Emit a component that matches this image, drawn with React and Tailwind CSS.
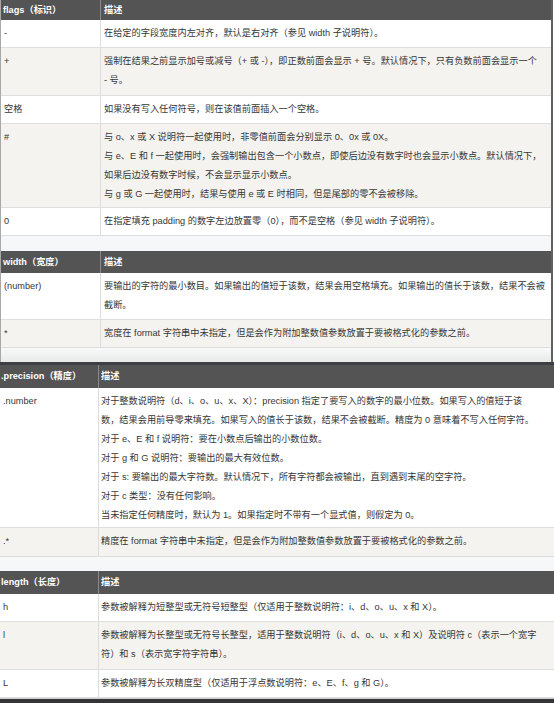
import React from "react";

const T1 = [
  { k: "-", lines: ["在给定的字段宽度内左对齐，默认是右对齐（参见 width 子说明符）。"] },
  {
    k: "+",
    alt: true,
    pb: "pb-[5px]",
    lines: [
      "强制在结果之前显示加号或减号（+ 或 -），即正数前面会显示 + 号。默认情况下，只有负数前面会显示一个",
      "- 号。",
    ],
  },
  { k: "空格", lines: ["如果没有写入任何符号，则在该值前面插入一个空格。"] },
  {
    k: "#",
    alt: true,
    pb: "pb-[3px]",
    lines: [
      "与 o、x 或 X 说明符一起使用时，非零值前面会分别显示 0、0x 或 0X。",
      "与 e、E 和 f 一起使用时，会强制输出包含一个小数点，即使后边没有数字时也会显示小数点。默认情况下，",
      "如果后边没有数字时候，不会显示显示小数点。",
      "与 g 或 G 一起使用时，结果与使用 e 或 E 时相同，但是尾部的零不会被移除。",
    ],
  },
  { k: "0", lines: ["在指定填充 padding 的数字左边放置零（0），而不是空格（参见 width 子说明符）。"] },
];

const T2 = [
  {
    k: "(number)",
    lines: [
      "要输出的字符的最小数目。如果输出的值短于该数，结果会用空格填充。如果输出的值长于该数，结果不会被",
      "截断。",
    ],
  },
  { k: "*", alt: true, lines: ["宽度在 format 字符串中未指定，但是会作为附加整数值参数放置于要被格式化的参数之前。"] },
];

const T3 = [
  {
    k: ".number",
    pb: "pb-[2px]",
    lines: [
      "对于整数说明符（d、i、o、u、x、X）：precision 指定了要写入的数字的最小位数。如果写入的值短于该",
      "数，结果会用前导零来填充。如果写入的值长于该数，结果不会被截断。精度为 0 意味着不写入任何字符。",
      "对于 e、E 和 f 说明符：要在小数点后输出的小数位数。",
      "对于 g 和 G 说明符：要输出的最大有效位数。",
      "对于 s: 要输出的最大字符数。默认情况下，所有字符都会被输出，直到遇到末尾的空字符。",
      "对于 c 类型：没有任何影响。",
      "当未指定任何精度时，默认为 1。如果指定时不带有一个显式值，则假定为 0。",
    ],
  },
  { k: ".*", alt: true, pb: "pb-[5px]", lines: ["精度在 format 字符串中未指定，但是会作为附加整数值参数放置于要被格式化的参数之前。"] },
];

const T4 = [
  { k: "h", lines: ["参数被解释为短整型或无符号短整型（仅适用于整数说明符：i、d、o、u、x 和 X）。"] },
  {
    k: "l",
    alt: true,
    pb: "pb-[5px]",
    lines: [
      "参数被解释为长整型或无符号长整型，适用于整数说明符（i、d、o、u、x 和 X）及说明符 c（表示一个宽字",
      "符）和 s（表示宽字符字符串）。",
    ],
  },
  { k: "L", lines: ["参数被解释为长双精度型（仅适用于浮点数说明符：e、E、f、g 和 G）。"] },
];

function Table({ head, rows, headH, shifted }) {
  return (
    <div>
      <div className={`flex bg-[#545454] text-white font-bold ${headH}`}>
        <div
          className={`w-[100px] shrink-0 border-r border-[#8a8a8a] flex items-center ${
            shifted ? "pl-[2px]" : "pl-[2px]"
          }`}
        >
          {head}
        </div>
        <div className={`flex-1 flex items-center ${shifted ? "pl-[2px]" : "pl-[3px]"}`}>描述</div>
      </div>
      {rows.map((r, i) => (
        <div
          key={i}
          className={`flex border-b border-[#dedede] ${r.alt ? "bg-[#f4f3f0]" : "bg-white"}`}
        >
          <div
            className={`w-[100px] shrink-0 border-r border-[#dcdcdc] pt-[4px] ${
              shifted ? "pl-[4px]" : "pl-[3px]"
            }`}
          >
            {r.k}
          </div>
          <div
            className={`flex-1 pt-[4px] ${r.pb || "pb-[4px]"} ${shifted ? "pl-[2px]" : "pl-[3px]"}`}
          >
            {r.lines.map((l, j) => (
              <div key={j} className="whitespace-nowrap">
                {l}
              </div>
            ))}
          </div>
        </div>
      ))}
    </div>
  );
}

export default function App() {
  return (
    <div className="w-[554px] h-[703px] overflow-hidden bg-white text-[#363636] text-[9.2px] leading-[19px] font-['Liberation_Sans','Noto_Sans_CJK_SC',sans-serif]">
      <div className="w-[553px] border-l border-[#a8a8a8] border-r-2 border-r-[#606060]">
        <Table head="flags（标识）" rows={T1} headH="h-[20px]" />
        <div className="h-[15px] bg-[#f6f7f9]" />
        <Table head="width（宽度）" rows={T2} headH="h-[22px]" />
        <div className="h-[14px] bg-gradient-to-b from-[#f8f9fa] to-[#e9e9e9]" />
      </div>
      <div className="h-[3px] bg-[#3d3f42]" />
      <div className="ml-[-1px] w-[555px]">
        <Table head=".precision（精度）" rows={T3} headH="h-[23px]" shifted />
        <div className="h-[14px] bg-[#f6f7f9]" />
        <Table head="length（长度）" rows={T4} headH="h-[23px]" shifted />
      </div>
      <div className="h-[1px] bg-[#d0d0d0]" />
      <div className="h-[6px] bg-[#333538]" />
    </div>
  );
}
